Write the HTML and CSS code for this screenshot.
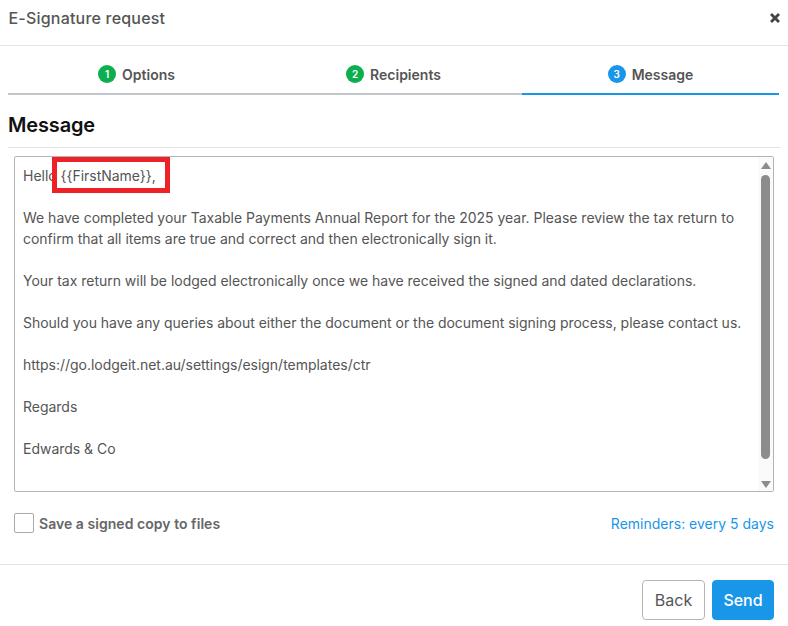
FILE: index.html
```html
<!DOCTYPE html>
<html>
<head>
<meta charset="utf-8">
<title>E-Signature request</title>
<link rel="stylesheet" href="styles.css">
</head>
<body>
<div class="header">
	<span class="title">E-Signature request</span>
	<svg class="close" viewBox="0 0 10 10" width="10" height="10"><path d="M2 0 5 3 8 0 10 2 7 5 10 8 8 10 5 7 2 10 0 8 3 5 0 2z"/></svg>
</div>
<div class="tabs">
	<div class="tab"><span class="num">1</span>Options</div>
	<div class="tab"><span class="num">2</span>Recipients</div>
	<div class="tab active"><span class="num">3</span>Message</div>
</div>
<h2 class="heading">Message</h2>
<div class="msgbox">
	<div class="msgtext">
		<p>Hello {{FirstName}},</p>
		<p>We have completed your Taxable Payments Annual Report for the 2025 year. Please review the tax return to confirm that all items are true and correct and then electronically sign it.</p>
		<p>Your tax return will be lodged electronically once we have received the signed and dated declarations.</p>
		<p>Should you have any queries about either the document or the document signing process, please contact us.</p>
		<p>https://go.lodgeit.net.au/settings/esign/templates/ctr</p>
		<p>Regards</p>
		<p>Edwards &amp; Co</p>
	</div>
	<div class="scrollbar">
		<span class="arrow up"></span>
		<span class="thumb"></span>
		<span class="arrow down"></span>
	</div>
	<div class="redbox"></div>
</div>
<div class="options">
	<label class="save"><span class="check"></span>Save a signed copy to files</label>
	<a class="reminders">Reminders: every 5 days</a>
</div>
<div class="footer">
	<button class="btn back">Back</button>
	<button class="btn send">Send</button>
</div>
</body>
</html>
```
FILE: styles.css
```css
body {
	margin: 0;
	background-color: #fff;
	font-family: Inter, "Liberation Sans", sans-serif;
	font-size: 14px;
	color: #555;
}
.header {
	display: flex;
	justify-content: space-between;
	align-items: center;
	height: 35px;
	padding: 0 8px 10px 8.5px;
	border-bottom: 1px solid #e4e4e4;
}
.title {
	font-size: 16px;
	font-weight: 500;
	letter-spacing: .2px;
	color: #555;
}
.close {
	fill: #444;
}
.tabs {
	display: flex;
	width: 771px;
	margin: 0 0 0 8px;
}
.tab {
	flex: 1;
	display: flex;
	justify-content: center;
	align-items: center;
	gap: 6px;
	height: 49px;
	padding-top: 9px;
	box-sizing: border-box;
	border-bottom: 2px solid #c2c5c9;
	font-weight: 600;
	color: #555;
}
.tab.active {
	border-bottom-color: #1a96e8;
}
.num {
	width: 18px;
	height: 18px;
	border-radius: 50%;
	background-color: #0cae4d;
	color: #fff;
	font-size: 10px;
	line-height: 18px;
	text-align: center;
}
.active .num {
	background-color: #1a96e8;
}
.heading {
	margin: 0 8px;
	height: 53px;
	line-height: 60px;
	box-sizing: border-box;
	font-size: 20px;
	font-weight: 600;
	letter-spacing: -.15px;
	color: #111;
	border-bottom: 1px solid #e4e4e4;
}
.msgbox {
	position: relative;
	display: flex;
	height: 334px;
	margin: 8px 14px 0 14px;
	border: 1px solid #b4b4b4;
	border-radius: 2px;
}
.msgtext {
	flex: 1;
	padding: 8px 8px 0 8px;
	line-height: 21px;
	letter-spacing: -.02px;
}
.msgtext p {
	margin: 0 0 21px 0;
}
.scrollbar {
	display: flex;
	flex-direction: column;
	align-items: center;
	width: 15px;
	padding: 5px 0 3px 0;
	background-color: #fafafa;
}
.arrow {
	width: 0;
	height: 0;
	border-left: 5px solid transparent;
	border-right: 5px solid transparent;
}
.arrow.up {
	border-bottom: 7px solid #8c8c8c;
}
.arrow.down {
	border-top: 7px solid #8c8c8c;
}
.thumb {
	flex: 1;
	width: 9px;
	margin: 6px 0 22px 0;
	border-radius: 5px;
	background-color: #8c8c8c;
}
.redbox {
	position: absolute;
	left: 37px;
	top: 0;
	width: 108px;
	height: 26px;
	border: 5px solid #ec2227;
}
.options {
	display: flex;
	justify-content: space-between;
	align-items: center;
	height: 20px;
	margin: 21px 14px 0 14px;
}
.save {
	display: flex;
	align-items: center;
	gap: 5px;
	font-weight: 600;
	letter-spacing: .04px;
	color: #666;
}
.check {
	width: 18px;
	height: 18px;
	border: 1px solid #aaa;
	border-radius: 2px;
}
.reminders {
	color: #1a96e8;
}
.footer {
	display: flex;
	justify-content: flex-end;
	gap: 7px;
	margin-top: 31px;
	padding: 15px 14px 0 0;
	border-top: 1px solid #e4e4e4;
}
.btn {
	height: 40px;
	border-radius: 4px;
	font-family: Inter, "Liberation Sans", sans-serif;
	font-size: 16px;
}
.back {
	width: 63px;
	background-color: #fff;
	border: 1px solid #b4b4b4;
	color: #555;
}
.send {
	width: 62px;
	background-color: #1a96e8;
	border: 1px solid #1a96e8;
	color: #fff;
	font-weight: 500;
}
```
